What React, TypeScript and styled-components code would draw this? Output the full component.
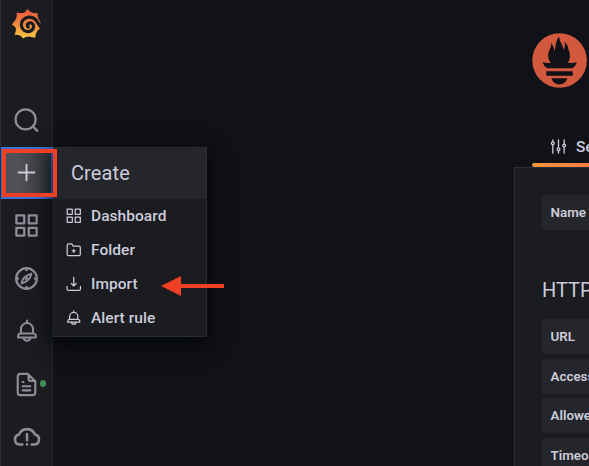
import React from 'react';
import styled, { createGlobalStyle } from 'styled-components';

const GlobalStyle = createGlobalStyle`
  * { box-sizing: border-box; }
  body { margin: 0; background: #111217; overflow: hidden; }
`;

const Page = styled.div`
  position: relative;
  display: flex;
  width: 589px;
  height: 466px;
  overflow: hidden;
  background: #111217;
  color: #ccccdc;
  font-family: Roboto, sans-serif;
`;

const Sidebar = styled.nav`
  display: flex;
  flex-direction: column;
  width: 53px;
  height: 466px;
  background: #1a1c20;
  border-left: 1px solid #2b2d32;
  border-right: 1px solid #24272c;
`;

const Brand = styled.div`
  height: 94px;
  flex: none;
  padding: 9px 0 0 10px;
`;

const NavItem = styled.div<{ $active?: boolean }>`
  position: relative;
  display: flex;
  align-items: center;
  justify-content: center;
  flex: none;
  width: ${(p) => (p.$active ? 52 : 51)}px;
  height: ${(p) => (p.$active ? 52 : 53)}px;
  padding: ${(p) => (p.$active ? '0 2px 2px 0' : '0 0 1px')};
  color: ${(p) => (p.$active ? '#ccccdc' : '#8e8e9a')};
  background: ${(p) => (p.$active ? 'linear-gradient(90deg, #505156 35%, #33363d)' : 'none')};
  border: ${(p) => (p.$active ? '2px solid #3d71d9' : '0')};
`;

const StatusDot = styled.span`
  position: absolute;
  left: 39px;
  top: 22px;
  width: 6px;
  height: 7px;
  border-radius: 50%;
  background: #3f8f58;
`;

const Menu = styled.section`
  position: absolute;
  left: 53px;
  top: 147px;
  width: 154px;
  height: 190px;
  background: #1a1c20;
  border: 1px solid #2a2c31;
  border-left-color: #222429;
  box-shadow: 0 6px 18px 3px rgba(1, 4, 9, 0.75);
`;

const MenuTitle = styled.h2`
  display: flex;
  align-items: center;
  height: 51px;
  margin: 0;
  padding: 0 0 2px 17px;
  background: #24262b;
  font-size: 20px;
  font-weight: 400;
  letter-spacing: 0.1px;
`;

const MenuItem = styled.div`
  display: flex;
  align-items: center;
  gap: 8.5px;
  height: 34px;
  padding-left: 11px;
  font-size: 15.5px;
  font-weight: 500;
  letter-spacing: 0.05px;
`;

const Main = styled.main`
  display: flex;
  flex-direction: column;
  flex: none;
  width: 75px;
  margin-left: 461px;
`;

const Header = styled.header`
  height: 131px;
  flex: none;
  padding: 33px 0 0 18px;
`;

const Tab = styled.div`
  display: flex;
  align-items: flex-start;
  flex: none;
  height: 36px;
  margin-left: 18px;
  padding: 7px 0 0 18px;
  gap: 9px;
  font-size: 15.5px;
  font-weight: 500;
  white-space: nowrap;
  overflow: hidden;
`;

const TabLine = styled.div`
  height: 4px;
  margin: -4px 0 0 18px;
  flex: none;
  z-index: 1;
  border-radius: 2px 0 0 2px;
  background: linear-gradient(90deg, #f5943c, #f27e42);
`;

const Panel = styled.div`
  display: flex;
  flex-direction: column;
  flex: 1;
  padding: 27px 0 0 27px;
  background: #1a1c20;
  border: solid #2b2d32;
  border-width: 1px 0 0 1px;
  overflow: hidden;
`;

const Heading = styled.h3`
  display: flex;
  align-items: center;
  flex: none;
  height: 24px;
  margin: 48px 0 17px;
  font-size: 20px;
  font-weight: 400;
`;

const Label = styled.div`
  display: flex;
  align-items: center;
  flex: none;
  height: 35px;
  margin-bottom: 4.6px;
  padding-left: 8.5px;
  border-radius: 2px 0 0 2px;
  background: #24262b;
  font-size: 13.4px;
  font-weight: 600;
  white-space: nowrap;
`;

const NameLabel = styled(Label)`
  margin-bottom: 0;
`;

const Highlight = styled.div`
  position: absolute;
  left: 2px;
  top: 149px;
  width: 55px;
  height: 48px;
  border: 4px solid #ee4025;
`;

const Arrow = styled.svg`
  position: absolute;
  left: 161px;
  top: 275px;
`;

const shapes: Record<string, React.ReactNode> = {
  search: (
    <>
      <circle cx="11.2" cy="11" r="8.9" />
      <path d="M17.7 17.3 21.6 21.2" />
    </>
  ),
  plus: <path d="M12 5v14M5 12h14" />,
  apps: <path d="M3 3h7v7H3zM14 3h7v7h-7zM3 14h7v7H3zM14 14h7v7h-7z" />,
  compass: (
    <>
      <circle cx="12" cy="12" r="9.2" />
      <path d="M12 3v1.6M12 19.4V21M3 12h1.6M19.4 12H21" />
      <path strokeWidth="1.6" d="M16.4 7.6C15.8 10.4 15 12.3 13.2 13.6 11.6 15 9.8 15.8 7.6 16.4 8.2 13.6 9 11.7 10.8 10.4 12.4 9 14.2 8.2 16.4 7.6zM11.3 12.7l1.4-1.4" />
    </>
  ),
  bell: (
    <path d="M12 2.4V4.5M6.4 14.3V10.3a5.6 5.6 0 0 1 11.2 0v4M6.4 14.3C4.6 14.3 3.8 15.3 3.8 16.5V18h16.4v-1.5c0-1.2-.8-2.2-2.6-2.2zM8.8 18.5a3.3 3.3 0 0 0 6.4 0" />
  ),
  document: (
    <path d="M13.2 2.6H6.6A2.4 2.4 0 0 0 4.2 5v14a2.4 2.4 0 0 0 2.4 2.4h10.8a2.4 2.4 0 0 0 2.4-2.4V9.2zM13.8 3.4v3.3a2.2 2.2 0 0 0 2.2 2.2h3.2M8.6 9.8h.7M8.6 13.6h6.8M8.6 17.2h6.8" />
  ),
  cloud: (
    <path d="M8 18.4H5.6a4.3 4.3 0 0 1-.4-8.5 7.3 7.3 0 0 1 13.6 0 4.3 4.3 0 0 1-.4 8.5H16M12 9.5v5.2M12 18.3v.1" />
  ),
  folder: (
    <path d="M5 4h4.6l1.3 3H19a2 2 0 0 1 2 2v9a2 2 0 0 1-2 2H5a2 2 0 0 1-2-2V6a2 2 0 0 1 2-2zM12 11.5v4M10 13.5h4" />
  ),
  import: <path d="M12 3v12M8.5 11.5 12 15l3.5-3.5M2.8 15.5v3.7a2 2 0 0 0 2 2h14.4a2 2 0 0 0 2-2v-3.7" />,
  sliders: (
    <>
      <path d="M4 2.5v3M4 9.5v12M12 2.5v11M12 18v3.5M20 2.5v6M20 13v8.5" />
      <circle cx="4" cy="7.5" r="2" />
      <circle cx="12" cy="16" r="2" />
      <circle cx="20" cy="10.5" r="2" />
    </>
  ),
};

const IconSvg = styled.svg`
  flex: none;
  fill: none;
  stroke: currentColor;
  stroke-linecap: round;
  stroke-linejoin: round;
`;

function Icon({ name, size = 27, weight = 2 }: { name: string; size?: number; weight?: number }) {
  return (
    <IconSvg width={size} height={size} viewBox="0 0 24 24" strokeWidth={weight}>
      {shapes[name]}
    </IconSvg>
  );
}

function GrafanaLogo() {
  return (
    <svg width="32" height="32" viewBox="0 0 32 32">
      <defs>
        <linearGradient id="flame" x1="0" y1="0" x2="0" y2="1">
          <stop offset="0" stopColor="#e9573e" />
          <stop offset=".5" stopColor="#ee8640" />
          <stop offset="1" stopColor="#f6c944" />
        </linearGradient>
      </defs>
      <path
        fill="url(#flame)"
        d="M16.4 0Q14.8 3.2 12 4 9 4.2 5.6 3.4 6.2 6.8 5.2 9.6 3.8 12.5.8 15.4 4 16.8 5 19.4 5 22.4 3.4 25.8 6.6 25.4 9 26.6 10.6 27.8 12 29.6 15 27.2 18 27.4 21.4 28 24.2 28.8 24.4 25.6 25.6 23.2 26.6 21.4 29 19.6 27 18 26.6 14.5L29.7 14.4Q29.2 11.4 27.2 9.4 26.4 6.6 26.6 4.2 23.4 4.4 20.6 3.4 18.4 2.2 16.4 0Z"
      />
      <path
        fill="none"
        stroke="#1a1c20"
        strokeWidth="3.2"
        strokeLinecap="round"
        d="M27.6 15C25.4 10.2 21.6 7.7 17.6 8.1 12.8 8.7 9.8 12.6 10.4 16.8c.7 4.2 4.4 6.4 8 5.6 3.3-.8 5-3.8 3.9-6.4-1-2.4-4-2.9-5.6-1-.8 1.1-.5 2.4.6 3"
      />
    </svg>
  );
}

function PrometheusLogo() {
  return (
    <svg width="56" height="56" viewBox="0 0 56 56">
      <circle cx="27.6" cy="27.5" r="27.3" fill="#d2593d" />
      <path
        fill="#111217"
        d="M10.5 29q4 1.5 8 .8h18.5q4 .7 8-.8-1.2 4-4.5 6.3H15.2Q11.6 33 10.5 29zM14.3 38.2h26.5v4.6H14.3zM19.5 45.2h15.8c-1.2 4-4.2 6.2-7.9 6.2s-6.7-2.2-7.9-6.2z"
      />
      <path
        fill="#111217"
        d="M19.4 30.8C16.2 27 15.3 22.8 16.8 18.8c1.2-3.1 2.5-5.2 2.4-8.7 2 2.6 2.7 5 3 8 2.1-4.3.6-9.6 5-14.7.2 5.5 3.8 7.7 4.3 13.7 1.6-3 1.8-5.8.9-8.7 4 3.9 3.5 6.1 4.6 9.3 1.7 4.7 1.2 9.2-1.8 13.1z"
      />
    </svg>
  );
}

const menuItems = [
  ['apps', 'Dashboard'],
  ['folder', 'Folder'],
  ['import', 'Import'],
  ['bell', 'Alert rule'],
];

export default function App() {
  return (
    <>
      <GlobalStyle />
      <Page>
        <Sidebar>
          <Brand><GrafanaLogo /></Brand>
          <NavItem><Icon name="search" /></NavItem>
          <NavItem $active><Icon name="plus" weight={1.7} /></NavItem>
          <NavItem><Icon name="apps" /></NavItem>
          <NavItem><Icon name="compass" /></NavItem>
          <NavItem><Icon name="bell" size={26} weight={1.9} /></NavItem>
          <NavItem><Icon name="document" weight={1.9} /><StatusDot /></NavItem>
          <NavItem><Icon name="cloud" size={28} weight={2.2} /></NavItem>
        </Sidebar>
        <Main>
          <Header><PrometheusLogo /></Header>
          <Tab><Icon name="sliders" size={17} weight={1.8} />Settings</Tab>
          <TabLine />
          <Panel>
            <NameLabel>Name</NameLabel>
            <Heading>HTTP</Heading>
            {['URL', 'Access', 'Allowed cookies', 'Timeout'].map((label) => (
              <Label key={label}>{label}</Label>
            ))}
          </Panel>
        </Main>
        <Menu>
          <MenuTitle>Create</MenuTitle>
          {menuItems.map(([icon, text]) => (
            <MenuItem key={text}>
              <Icon name={icon} size={17.5} weight={1.7} />
              {text}
            </MenuItem>
          ))}
        </Menu>
        <Highlight />
        <Arrow width="64" height="22">
          <path d="M0 11 20 1V9H63V13H20V21Z" fill="#ee4025" />
        </Arrow>
      </Page>
    </>
  );
}
